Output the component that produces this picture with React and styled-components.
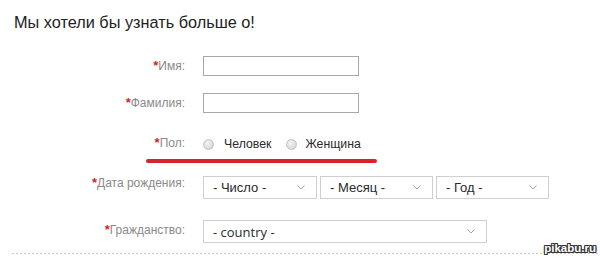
import React from "react";
import styled, { createGlobalStyle } from "styled-components";

const Global = createGlobalStyle`
  html, body { margin: 0; padding: 0; background: #fff; }
  body { font-family: Arial, "Liberation Sans", sans-serif; }
  * { box-sizing: border-box; }
`;

const Page = styled.div`
  position: relative;
  width: 600px;
  height: 259px;
  overflow: hidden;
  background: #fff;
`;

const Title = styled.h1`
  margin: 0;
  padding: 11px 0 0 14px;
  height: 56px;
  font-family: "Liberation Sans", Arial, sans-serif;
  font-weight: normal;
  font-size: 16.3px;
  line-height: 22px;
  color: #222;
`;

const Row = styled.div`
  display: flex;
  align-items: flex-start;
  height: ${(p) => p.$h}px;
  margin-top: ${(p) => p.$mt || 0}px;
`;

const Label = styled.div`
  width: 187px;
  padding-right: 2px;
  padding-top: ${(p) => p.$pt || 0}px;
  text-align: right;
  font-family: "Liberation Sans", Arial, sans-serif;
  font-size: 12px;
  line-height: 14px;
  color: #8a8a8a;
  flex-shrink: 0;
`;

const Star = styled.span`
  color: #d21f25;
  font-weight: bold;
  font-size: 13px;
`;

const Field = styled.div`
  margin-left: 16px;
  display: flex;
  align-items: center;
  gap: ${(p) => p.$gap || 0}px;
`;

const TextInput = styled.input`
  width: 156px;
  height: 20px;
  border: 1px solid #a8a8a8;
  background: #fff;
  margin: 0;
  padding: 0 4px;
  outline: none;
`;

const RadioGroup = styled.div`
  margin-left: 16px;
  padding-top: 1px;
  display: flex;
  align-items: center;
`;

const RadioOption = styled.label`
  display: flex;
  align-items: center;
  margin-right: 15px;
  font-family: "Liberation Sans", Arial, sans-serif;
  font-size: 12.3px;
  color: #2a2a2a;
`;

const RadioDot = styled.span`
  display: inline-block;
  width: 11px;
  height: 11px;
  border-radius: 50%;
  border: 1px solid #c4c4c4;
  background: radial-gradient(circle at 40% 35%, #f4f4f4 0%, #dcdcdc 60%, #cfcfcf 100%);
  margin: 0 ${(p) => p.$mr}px 0 0;
`;

const Underline = styled.div`
  margin: 6px 0 0 146px;
  width: 231px;
  height: 4px;
  border-radius: 2px;
  background: #d9232b;
`;

const Select = styled.div`
  width: ${(p) => p.$w}px;
  height: 23px;
  border: 1px solid #cfcfcf;
  background: #fff;
  display: flex;
  align-items: center;
  justify-content: space-between;
  padding: 0 11px 0 9px;
  font-family: ${(p) => (p.$open ? '"Open Sans", "Liberation Sans", sans-serif' : '"Liberation Sans", Arial, sans-serif')};
  font-size: 13px;
  color: #2a2a2a;
`;

const Chevron = () => (
  <svg width="8" height="5" viewBox="0 0 8 5">
    <path d="M0.5 0.5 L4 4 L7.5 0.5" fill="none" stroke="#a8a8a8" strokeWidth="1" />
  </svg>
);

const Dotted = styled.div`
  margin: 10px 0 0 12px;
  height: 1px;
  background-image: linear-gradient(to right, #c8c8c8 0 2px, transparent 2px 4px);
  background-size: 4px 1px;
  background-repeat: repeat-x;
`;

const Watermark = styled.div`
  position: absolute;
  right: 4px;
  bottom: 5px;
  font-family: "Liberation Sans", Arial, sans-serif;
  font-weight: bold;
  font-size: 11.5px;
  color: #fff;
  text-shadow: -1px -1px 0 #333, 1px -1px 0 #333, -1px 1px 0 #333, 1px 1px 0 #333, 0 1px 0 #333, 0 -1px 0 #333, 1px 0 0 #333, -1px 0 0 #333;
`;

export default function App() {
  return (
    <Page>
      <Global />
      <Title>Мы хотели бы узнать больше о!</Title>
      <Row $h={37}>
        <Label $pt={3}><Star>*</Star>Имя:</Label>
        <Field><TextInput /></Field>
      </Row>
      <Row $h={43}>
        <Label $pt={3}><Star>*</Star>Фамилия:</Label>
        <Field><TextInput /></Field>
      </Row>
      <Row $h={17}>
        <Label $pt={0}><Star>*</Star>Пол:</Label>
        <RadioGroup>
          <RadioOption><RadioDot $mr={10} />Человек</RadioOption>
          <RadioOption><RadioDot $mr={8} />Женщина</RadioOption>
        </RadioGroup>
      </Row>
      <Underline />
      <Row $h={44} $mt={13}>
        <Label $pt={0}><Star>*</Star>Дата рождения:</Label>
        <Field $gap={3}>
          <Select $w={114}>- Число -<Chevron /></Select>
          <Select $w={113}>- Месяц -<Chevron /></Select>
          <Select $w={113}>- Год -<Chevron /></Select>
        </Field>
      </Row>
      <Row $h={23}>
        <Label $pt={3}><Star>*</Star>Гражданство:</Label>
        <Field>
          <Select $w={284} $open>- country -<Chevron /></Select>
        </Field>
      </Row>
      <Dotted />
      <Watermark>pikabu.ru</Watermark>
    </Page>
  );
}
